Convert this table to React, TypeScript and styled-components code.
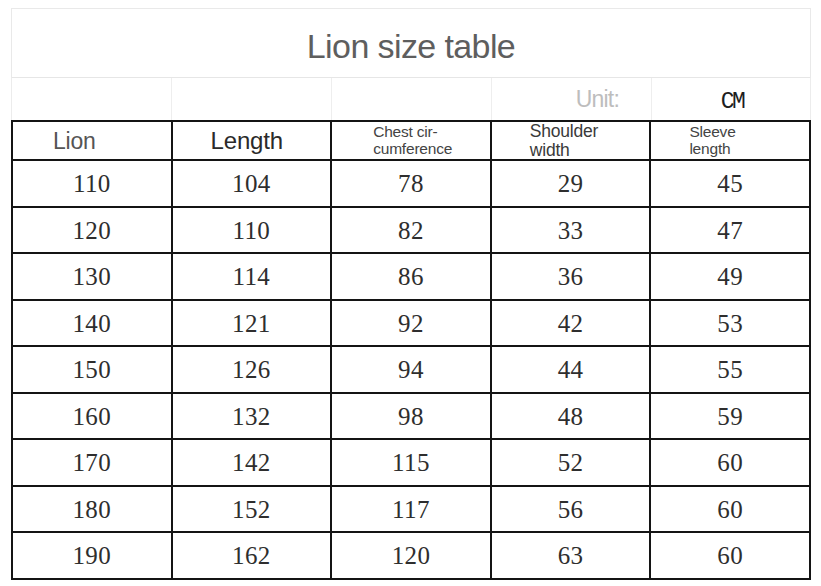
import { createGlobalStyle, styled } from "styled-components";

const GlobalStyle = createGlobalStyle`
  html, body {
    margin: 0;
    padding: 0;
    background: #ffffff;
  }
  body {
    font-family: "Liberation Sans", Arial, sans-serif;
  }
`;

const Page = styled.div`
  width: 821px;
  height: 586px;
  padding: 8px 0 0 11px;
  box-sizing: border-box;
  background: #fff;
`;

const Sheet = styled.div`
  width: 800px;
  display: flex;
  flex-direction: column;
`;

const TitleBar = styled.div`
  height: 69px;
  padding-top: 6px;
  box-sizing: border-box;
  display: flex;
  align-items: center;
  justify-content: center;
  border: 1px solid #e9e9e9;
  border-bottom: none;
  font-family: "Liberation Sans", Arial, sans-serif;
  font-size: 34px;
  color: #5e5e5e;
  letter-spacing: -0.6px;
`;

const UnitRow = styled.div`
  height: 43px;
  display: grid;
  grid-template-columns: repeat(5, 160px);
  border-top: 1px solid #e6e6e6;
  border-left: 1px solid #ececec;
  border-right: 1px solid #ececec;
  box-sizing: border-box;
`;

const UnitCell = styled.div<{ $align?: string }>`
  display: flex;
  align-items: center;
  justify-content: ${(p) => p.$align || "center"};
  padding-right: ${(p) => (p.$align === "flex-end" ? "32px" : "0")};
  border-right: 1px solid #eeeeee;
  &:last-child {
    border-right: none;
  }
`;

const UnitLabel = styled.span`
  font-family: "Liberation Sans", Arial, sans-serif;
  font-size: 23px;
  color: #bdbdbd;
  letter-spacing: -0.8px;
`;

const UnitValue = styled.span`
  font-family: "Liberation Mono", "Courier New", monospace;
  font-size: 23px;
  color: #1e1e1e;
  letter-spacing: -2.5px;
  margin-top: 5px;
`;

const SizeTable = styled.table`
  width: 800px;
  border-collapse: collapse;
  table-layout: fixed;
  border: 2px solid #141414;
`;

const HeadCell = styled.th<{ $pad: number; $size: number; $color?: string }>`
  height: 37px;
  padding: 0 0 0 ${(p) => p.$pad}px;
  border: 2px solid #141414;
  text-align: left;
  vertical-align: middle;
  font-family: "Liberation Sans", Arial, sans-serif;
  font-weight: normal;
  font-size: ${(p) => p.$size}px;
  line-height: ${(p) => p.$size + 1}px;
  color: ${(p) => p.$color || "#444"};
  letter-spacing: -0.2px;
`;

const Row = styled.tr`
  height: 46.5px;
`;

const Cell = styled.td`
  border: 2px solid #141414;
  padding: 2px 0 0;
  text-align: center;
  vertical-align: middle;
  font-family: "Liberation Serif", "Times New Roman", serif;
  font-size: 25px;
  letter-spacing: 0.4px;
  color: #2e2e2e;
`;

const headers = [
  { label: ["Lion"], pad: 40, size: 23, color: "#555" },
  { label: ["Length"], pad: 38, size: 24, color: "#2a2a2a" },
  { label: ["Chest cir-", "cumference"], pad: 41, size: 15.5, color: "#444" },
  { label: ["Shoulder", "width"], pad: 38, size: 17.5, color: "#3a3a3a" },
  { label: ["Sleeve", "length"], pad: 38, size: 15.5, color: "#444" },
];

const sizes = [
  [110, 104, 78, 29, 45],
  [120, 110, 82, 33, 47],
  [130, 114, 86, 36, 49],
  [140, 121, 92, 42, 53],
  [150, 126, 94, 44, 55],
  [160, 132, 98, 48, 59],
  [170, 142, 115, 52, 60],
  [180, 152, 117, 56, 60],
  [190, 162, 120, 63, 60],
];

const App = () => {
  return (
    <Page>
      <GlobalStyle />
      <Sheet>
        <TitleBar>Lion size table</TitleBar>
        <UnitRow>
          <UnitCell />
          <UnitCell />
          <UnitCell />
          <UnitCell $align="flex-end">
            <UnitLabel>Unit:</UnitLabel>
          </UnitCell>
          <UnitCell>
            <UnitValue>CM</UnitValue>
          </UnitCell>
        </UnitRow>
        <SizeTable>
          <thead>
            <tr>
              {headers.map((h, i) => (
                <HeadCell key={i} $pad={h.pad} $size={h.size} $color={h.color}>
                  {h.label.map((line, j) => (
                    <div key={j}>{line}</div>
                  ))}
                </HeadCell>
              ))}
            </tr>
          </thead>
          <tbody>
            {sizes.map((row, i) => (
              <Row key={i}>
                {row.map((v, j) => (
                  <Cell key={j}>{v}</Cell>
                ))}
              </Row>
            ))}
          </tbody>
        </SizeTable>
      </Sheet>
    </Page>
  );
};

export default App;
